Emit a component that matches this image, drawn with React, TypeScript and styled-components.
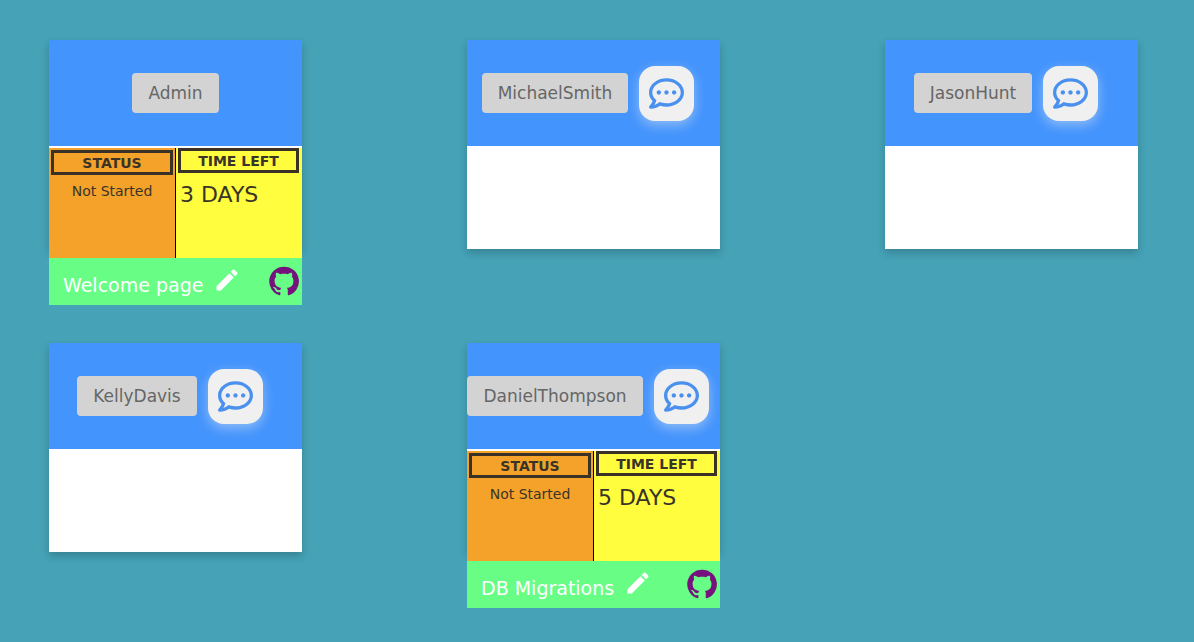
import React from "react";
import styled, { createGlobalStyle } from "styled-components";
import { FaRegCommentDots } from "react-icons/fa";
import { MdEdit } from "react-icons/md";

const GlobalStyle = createGlobalStyle`
  *, *::before, *::after { box-sizing: border-box; }
  html { background: #45a2b7; }
  body {
    margin: 0;
    font-family: Verdana, "DejaVu Sans", sans-serif;
    color: #3a3428;
  }
  button { font-family: inherit; cursor: pointer; }
`;

const Board = styled.main`
  display: grid;
  grid-template-columns: repeat(3, 253px);
  justify-content: space-between;
  row-gap: 38px;
  padding: 40px 56px 34px 49px;
`;

const Slot = styled.div`
  min-height: 265px;
`;

const Card = styled.article`
  height: 209px;
  background: #fff;
  box-shadow: 0 4px 8px rgba(0, 0, 0, 0.2);
`;

const CardHeader = styled.header`
  display: flex;
  align-items: center;
  justify-content: center;
  height: 106px;
  background: #4494fd;
`;

const NameButton = styled.button`
  height: 40px;
  padding: 0 16px;
  border: 0;
  border-radius: 4px;
  background: #d3d3d3;
  color: #666;
  font-size: 17px;
  line-height: 24px;
`;

const ChatButton = styled.button`
  display: flex;
  flex: none;
  align-items: center;
  justify-content: center;
  width: 55px;
  height: 55px;
  margin: 0 11px;
  padding: 0;
  border: 0;
  border-radius: 16px;
  background: #f0f0f0;
  color: #4a90ee;
  font-size: 35px;
  box-shadow: 0 4px 12px rgba(240, 240, 240, 0.45);
`;

const Details = styled.div`
  display: grid;
  grid-template-columns: 127px 1fr;
  height: 110px;
  margin-top: 2px;
`;

const StatusPanel = styled.section`
  padding: 2px;
  border-right: 1px solid #000;
  background: #f5a22b;
  text-align: center;
`;

const TimePanel = styled.section`
  padding: 0 3px 0 2px;
  background: #fffd3d;
`;

const PanelTitle = styled.h2`
  margin: 0;
  padding-top: 1px;
  border: 3px solid #3a3226;
  font-size: 14px;
  line-height: 18px;
  text-align: center;
`;

const StatusText = styled.p`
  margin: 6px 0 0;
  font-size: 14px;
  line-height: 20px;
`;

const TimeText = styled.p`
  margin: 8px 0 0 2px;
  font-size: 22px;
  line-height: 28px;
`;

const TaskBar = styled.footer`
  display: flex;
  align-items: center;
  height: 47px;
  padding: 0 2px 0 14px;
  background: #68fe86;
  color: #fff;
`;

const TaskName = styled.span`
  padding-top: 7px;
  font-size: 19px;
  line-height: 24px;
  white-space: nowrap;
`;

const EditButton = styled.button`
  display: flex;
  margin: 0 0 4px 10px;
  padding: 0;
  border: 0;
  background: none;
  color: #fff;
  font-size: 28px;
`;

const RepoLink = styled.a`
  display: flex;
  margin: 0 0 2px auto;
  color: #75127e;
`;

const GithubMark = () => (
  <svg width="32" height="32" viewBox="0 0 24 24" fill="currentColor" aria-hidden="true">
    <path d="M12 1.27a11 11 0 00-3.48 21.46c.55.09.73-.28.73-.55v-1.84c-3.03.64-3.67-1.46-3.67-1.46-.55-1.29-1.28-1.65-1.28-1.65-.92-.65.1-.65.1-.65 1.1 0 1.73 1.1 1.73 1.1.92 1.65 2.57 1.2 3.21.92a2 2 0 01.64-1.47c-2.47-.27-5.04-1.19-5.04-5.5 0-1.1.46-2.1 1.2-2.84a3.76 3.76 0 010-2.93s.91-.28 3.11 1.1c1.8-.49 3.7-.49 5.5 0 2.1-1.38 3.02-1.1 3.02-1.1a3.76 3.76 0 01.1 2.93c.83.74 1.2 1.74 1.2 2.94 0 4.21-2.57 5.13-5.04 5.4.45.37.82.92.82 2.02v3.03c0 .27.1.64.73.55A11 11 0 0012 1.27" />
  </svg>
);

interface Task {
  title: string;
  status: string;
  timeLeft: string;
}

interface Member {
  name: string;
  canChat: boolean;
  task?: Task;
}

const members: Member[] = [
  {
    name: "Admin",
    canChat: false,
    task: { title: "Welcome page", status: "Not Started", timeLeft: "3 DAYS" },
  },
  { name: "MichaelSmith", canChat: true },
  { name: "JasonHunt", canChat: true },
  { name: "KellyDavis", canChat: true },
  {
    name: "DanielThompson",
    canChat: true,
    task: { title: "DB Migrations", status: "Not Started", timeLeft: "5 DAYS" },
  },
];

const MemberCard = ({ member }: { member: Member }) => (
  <Slot>
    <Card>
      <CardHeader>
        <NameButton type="button">{member.name}</NameButton>
        {member.canChat && (
          <ChatButton type="button" aria-label={`Chat with ${member.name}`}>
            <FaRegCommentDots />
          </ChatButton>
        )}
      </CardHeader>
      {member.task && (
        <>
          <Details>
            <StatusPanel>
              <PanelTitle>STATUS</PanelTitle>
              <StatusText>{member.task.status}</StatusText>
            </StatusPanel>
            <TimePanel>
              <PanelTitle>TIME LEFT</PanelTitle>
              <TimeText>{member.task.timeLeft}</TimeText>
            </TimePanel>
          </Details>
          <TaskBar>
            <TaskName>{member.task.title}</TaskName>
            <EditButton type="button" aria-label={`Edit ${member.task.title}`}>
              <MdEdit />
            </EditButton>
            <RepoLink href="#" aria-label="Open repository">
              <GithubMark />
            </RepoLink>
          </TaskBar>
        </>
      )}
    </Card>
  </Slot>
);

export default function App() {
  return (
    <>
      <GlobalStyle />
      <Board>
        {members.map((member) => (
          <MemberCard key={member.name} member={member} />
        ))}
      </Board>
    </>
  );
}
